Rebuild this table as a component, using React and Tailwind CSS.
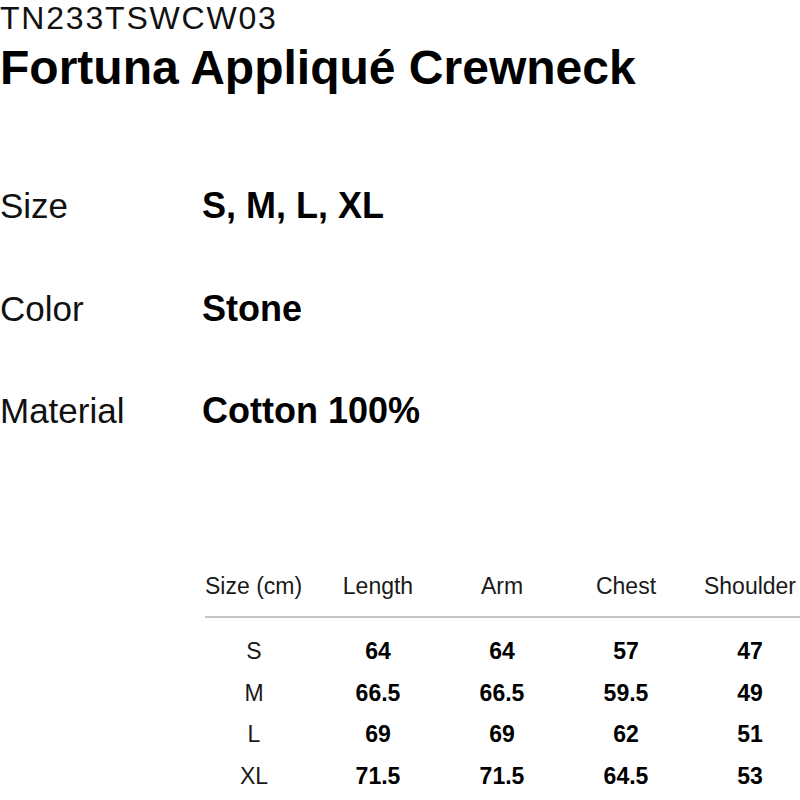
import React from 'react';

const specs = [
  { label: 'Size', value: 'S, M, L, XL' },
  { label: 'Color', value: 'Stone' },
  { label: 'Material', value: 'Cotton 100%' },
];

const headers = ['Length', 'Arm', 'Chest', 'Shoulder'];

const rows = [
  { size: 'S', values: ['64', '64', '57', '47'] },
  { size: 'M', values: ['66.5', '66.5', '59.5', '49'] },
  { size: 'L', values: ['69', '69', '62', '51'] },
  { size: 'XL', values: ['71.5', '71.5', '64.5', '53'] },
];

const App = () => {
  return (
    <div className="w-[800px] h-[800px] bg-white text-black overflow-hidden font-['Liberation_Sans',Arial,sans-serif]">
      {/* product code + name */}
      <p className="pt-[1px] text-[32px] leading-[34px] tracking-[1.8px] text-[#111]">TN233TSWCW03</p>
      <h1 className="mt-[9px] text-[48px] leading-[48px] font-bold whitespace-nowrap">Fortuna Appliqué Crewneck</h1>

      {/* spec list */}
      <div className="mt-[96px] flex flex-col gap-[67.5px]">
        {specs.map((s) => (
          <div key={s.label} className="flex text-[35px] leading-[35px]">
            <span className="w-[202px] shrink-0 text-[#111]">{s.label}</span>
            <span className="font-bold text-[36px]">{s.value}</span>
          </div>
        ))}
      </div>

      {/* size table */}
      <div className="mt-[147px] ml-[205px] w-[620px]">
        <div className="flex text-[23px] leading-[23px] text-[#1a1a1a] pb-[18px] border-b-2 border-[#c4c4c4]">
          <div className="w-[111px] shrink-0 whitespace-nowrap">Size (cm)</div>
          {headers.map((h) => (
            <div key={h} className="w-[124px] shrink-0 text-center">{h}</div>
          ))}
        </div>
        <div className="mt-[13px]">
          {rows.map((r) => (
            <div key={r.size} className="flex text-[23px] leading-[41.5px]">
              <div className="w-[98px] mr-[13px] shrink-0 text-center text-[#1a1a1a]">{r.size}</div>
              {r.values.map((v, i) => (
                <div key={i} className="w-[124px] shrink-0 text-center font-bold">{v}</div>
              ))}
            </div>
          ))}
        </div>
      </div>
    </div>
  );
};

export default App;
